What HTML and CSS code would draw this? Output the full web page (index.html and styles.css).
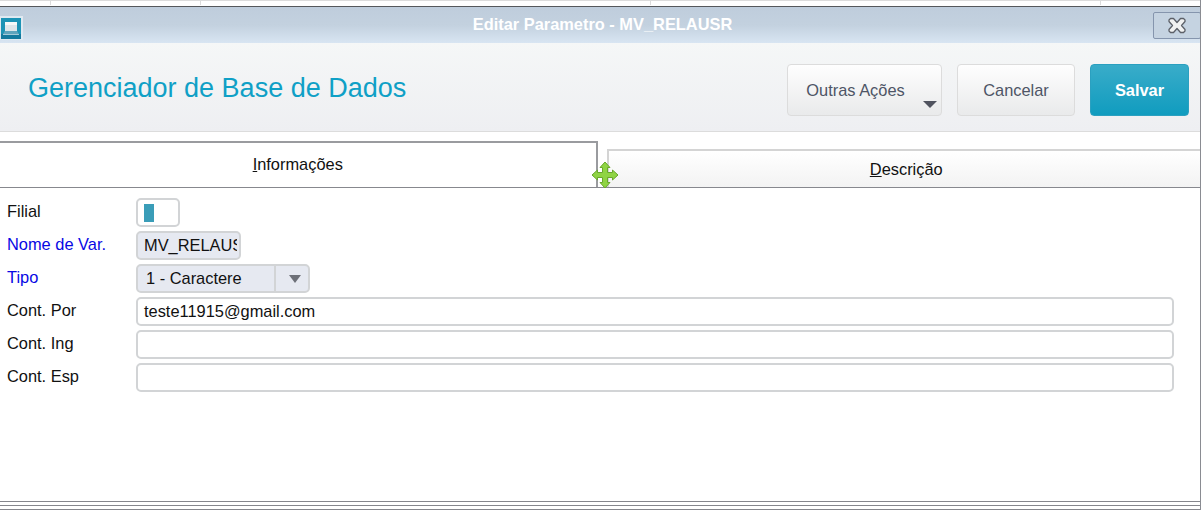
FILE: index.html
```html
<!DOCTYPE html>
<html lang="pt">
<head>
<meta charset="utf-8">
<title>Editar Parametro - MV_RELAUSR</title>
<link rel="stylesheet" href="styles.css">
</head>
<body>
<div class="page">
  <div class="backdrop">
    <span class="cell cell-a"></span><span class="cell cell-b"></span><span class="cell cell-c"></span><span class="cell cell-d"></span>
  </div>
  <div class="titlebar">
    <svg class="appicon" width="23" height="24" viewBox="0 0 23 24">
      <rect x="0" y="0" width="23" height="24" fill="#dfe9f1"/>
      <rect x="1" y="2" width="20" height="21" fill="#1d93b5"/>
      <rect x="1" y="18" width="20" height="5" fill="#14799e"/>
      <rect x="5" y="6" width="12" height="9" fill="#dfe6ea"/>
      <rect x="5" y="6" width="12" height="3" fill="#f6f8f8"/>
      <path d="M5 15h12l2 3H3z" fill="#5fa4bd"/>
      <rect x="3" y="18" width="16" height="1" fill="#a4cad8"/>
    </svg>
    <div class="wintitle">Editar Parametro - MV_RELAUSR</div>
    <button class="closebtn" aria-label="Fechar">
      <svg width="20" height="17" viewBox="0 0 20 17">
        <path d="M3.500 1.500h3L10 5.500l3.500-4h3l1.500 1.500v1.500L14.500 8.500l3.500 4v1.500L16.500 15.500h-3L10 11.500l-3.500 4h-3L2 14v-1.500l3.500-4-3.500-4V3z" fill="#f1f2f2" stroke="#5c6068" stroke-width="1.300" stroke-linejoin="round"/>
      </svg>
    </button>
  </div>
  <header class="toolbar">
    <h1 class="apptitle">Gerenciador de Base de Dados</h1>
    <div class="actions">
      <button class="btn btn-more">Outras Ações<span class="caret"></span></button>
      <button class="btn btn-cancel">Cancelar</button>
      <button class="btn btn-save">Salvar</button>
    </div>
  </header>
  <nav class="tabs">
    <div class="tab tab-active"><span><u>I</u>nformações</span></div>
    <div class="tab tab-idle"><span><u>D</u>escrição</span></div>
    <svg class="moveicon" width="28" height="28" viewBox="0 0 28 28">
      <path d="M14 1l5 5.500h-2.500v5h5V9l5.500 5-5.500 5v-2.500h-5v5H19L14 27l-5-5.500h2.500v-5h-5V19L1 14l5.500-5v2.500h5v-5H9z" fill="#8fd443" stroke="#69a82b" stroke-width="1"/>
    </svg>
  </nav>
  <main class="form">
    <div class="row"><label class="lbl">Filial</label><div class="field field-filial"><span class="mark"></span></div></div>
    <div class="row"><label class="lbl lbl-req">Nome de Var.</label><div class="field field-ro field-name"><span class="clip">MV_RELAUSR</span></div></div>
    <div class="row"><label class="lbl lbl-req">Tipo</label><div class="field field-ro field-select"><span class="seltext">1 - Caractere</span><span class="selbtn"><span class="selcaret"></span></span></div></div>
    <div class="row"><label class="lbl">Cont. Por</label><div class="field field-wide">teste11915@gmail.com</div></div>
    <div class="row"><label class="lbl">Cont. Ing</label><div class="field field-wide"></div></div>
    <div class="row"><label class="lbl">Cont. Esp</label><div class="field field-wide"></div></div>
  </main>
  <div class="footer"></div>
</div>
</body>
</html>
```
FILE: styles.css
```css
* { box-sizing: border-box; }
html, body { margin: 0; padding: 0; }
body { background: #fff; font-family: "Liberation Sans", Arial, sans-serif; overflow: hidden; }
.page { width: 1201px; height: 510px; display: flex; flex-direction: column; position: relative; overflow: hidden; border-right: 1px solid #8a8c92; }

.backdrop { height: 7px; flex: none; position: relative; background: #fff; border-bottom: 1px solid #55585c; box-shadow: inset 0 1px 0 #dcdcdc; }
.cell { position: absolute; top: 0; width: 1px; height: 5px; background: #dcdcdc; }
.cell-a { left: 50px; }
.cell-b { left: 200px; }
.cell-c { left: 650px; }
.cell-d { left: 1100px; }

.titlebar { height: 36px; flex: none; display: flex; align-items: flex-start; position: relative; background: linear-gradient(#bfcddc 0%, #c3d1df 50%, #d8e5f2 100%); }
.appicon { position: absolute; left: 0; top: 9px; }
.wintitle { flex: 1; text-align: center; padding-top: 9px; padding-left: 5px; color: #fff; font-size: 16.4px; font-weight: bold; line-height: 17px; }
.closebtn { position: absolute; right: -1px; top: 5px; width: 48px; height: 27px; padding: 0; display: flex; align-items: center; justify-content: center; background: #c5d3e1; border: 1px solid #8595ad; border-radius: 2px; }

.toolbar { height: 89px; flex: none; display: flex; align-items: flex-start; justify-content: space-between; background: linear-gradient(#f5f7f7, #eeeff2); border-bottom: 1px solid #dcdcdc; }
.apptitle { margin: 30px 0 0 28px; font-size: 27px; line-height: 31px; font-weight: normal; color: #0fa0c6; }
.actions { display: flex; gap: 15px; margin: 21px 11px 0 0; }
.btn { height: 52px; padding: 0; border-radius: 4px; font-family: inherit; font-size: 16.4px; color: #4e5566; border: 1px solid #dcdcdc; background: linear-gradient(#fefefe, #e9eaeb); position: relative; }
.btn-more { width: 155px; padding-right: 18px; }
.btn-cancel { width: 118px; }
.btn-save { width: 99px; color: #fff; font-weight: bold; border-color: #2ba0c0; background: linear-gradient(#39acc9, #109cbf); }
.caret { position: absolute; right: 4px; bottom: 7px; width: 0; height: 0; border-left: 7px solid transparent; border-right: 7px solid transparent; border-top: 7px solid #50535f; }

.tabs { height: 56px; flex: none; position: relative; display: flex; align-items: flex-end; background: #fff; border-bottom: 1px solid #87888e; }
.tab { display: flex; justify-content: center; font-size: 16.4px; color: #111; background: #fff; }
.tab u { text-decoration: underline; }
.tab-active { width: 598px; height: 46px; padding-top: 12px; border-top: 2px solid #9a9b9f; border-right: 2px solid #9a9b9f; }
.tab-idle { width: 594px; height: 38px; margin-left: 9px; padding: 9px 0 0 4px; border-top: 2px solid #d4d4d4; border-left: 2px solid #d4d4d4; background: linear-gradient(#ffffff, #f3f3f3); }
.moveicon { position: absolute; left: 591px; top: 29px; }

.form { flex: 1; display: flex; flex-direction: column; gap: 4px; padding: 10px 26px 0 7px; }
.row { display: flex; align-items: flex-start; height: 29px; flex: none; }
.lbl { width: 129px; flex: none; font-size: 16.4px; line-height: 17px; padding-top: 5px; color: #111; }
.lbl-req { color: #0808e4; }
.field { height: 29px; border: 2px solid #d2d4d6; border-radius: 5px; background: #fff; font-size: 16.4px; line-height: 24px; color: #111; padding: 0 6px; }
.field-filial { width: 44px; padding: 4px 6px; }
.mark { display: block; width: 10px; height: 18px; background: #3a9db8; }
.field-ro { background: #e6e9f1; }
.field-name { width: 105px; padding-right: 2px; }
.clip { display: block; overflow: hidden; white-space: nowrap; }
.field-select { width: 174px; padding: 0; display: flex; }
.seltext { width: 138px; padding-left: 8px; border-right: 2px solid #d2d4d6; }
.selbtn { flex: 1; display: flex; align-items: center; justify-content: center; padding-left: 6px; }
.selcaret { width: 0; height: 0; border-left: 6px solid transparent; border-right: 6px solid transparent; border-top: 8px solid #6d7078; }
.field-wide { flex: 1; }

.footer { height: 9px; flex: none; border-top: 1px solid #85868c; border-bottom: 1px solid #85868c; position: relative; background: #fff; }
.footer::after { content: ""; position: absolute; left: 0; right: 0; top: 3px; height: 1px; background: #85868c; }
```
